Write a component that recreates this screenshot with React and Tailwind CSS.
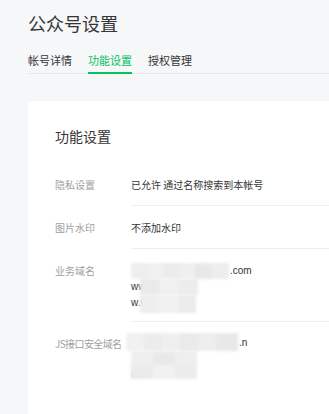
export default function App() {
  const font = { fontFamily: '"Noto Sans CJK SC", "Noto Sans", sans-serif' };
  const latin = { fontFamily: '"Liberation Sans", sans-serif' };

  const tabs = ['帐号详情', '功能设置', '授权管理'];

  return (
    <div
      className="w-[329px] h-[414px] overflow-hidden bg-[#f6f7f8] pl-[28px] text-[#353535]"
      style={font}
    >
      {/* Header */}
      <h1 className="pt-[9px] text-[18px] leading-[28px] font-normal">公众号设置</h1>

      {/* Tabs */}
      <div className="mt-[13px] flex gap-[16px] border-b border-[#e4e6e8]">
        {tabs.map((t, i) => (
          <div
            key={t}
            className={`-mb-px pb-[2px] text-[11px] leading-[20px] border-b-2 ${
              i === 1 ? 'border-[#07c160] text-[#07c160]' : 'border-transparent'
            }`}
          >
            {t}
          </div>
        ))}
      </div>

      {/* Card */}
      <div className="mt-[27px] h-[400px] rounded-tl-[3px] bg-white pl-[27px] pt-[25px] shadow-[0_0_2px_rgba(0,0,0,0.04)]">
        <h2 className="mb-[17px] text-[14px] leading-[20px] font-normal">功能设置</h2>

        <div className="text-[10px] leading-[16px]">
          <div className="flex">
            <div className="w-[76px] pt-[14px] text-[#a0a0a0]">隐私设置</div>
            <div className="flex-1 border-b border-[#eeeeee] pt-[14px] pb-[12px]">
              已允许 通过名称搜索到本帐号
            </div>
          </div>

          <div className="flex">
            <div className="w-[76px] pt-[14px] text-[#a0a0a0]">图片水印</div>
            <div className="flex-1 border-b border-[#eeeeee] pt-[14px] pb-[12px]">不添加水印</div>
          </div>

          <div className="flex">
            <div className="w-[76px] pt-[14px] text-[#a0a0a0]">业务域名</div>
            <div className="flex-1 border-b border-[#eeeeee] pt-[14px] pb-[10px]">
              <div className="relative" style={latin}>
                <div>
                  <span className="inline-block w-[99px]" />
                  .com
                </div>
                <div>ww</div>
                <div>w.w</div>
                {/* blurred patches */}
                <div className="absolute left-0 top-0 h-[16px] w-[98px] blur-[1.5px]">
                  <div className="flex h-full">
                    <div className="w-[16px] bg-[#eeeeee]" />
                    <div className="w-[16px] bg-[#f0f0f0]" />
                    <div className="w-[16px] bg-[#ebebeb]" />
                    <div className="w-[16px] bg-[#efefef]" />
                    <div className="w-[16px] bg-[#e8e8e8]" />
                    <div className="w-[18px] bg-[#ededed]" />
                  </div>
                </div>
                <div className="absolute left-[9px] top-[16px] h-[16px] w-[58px] blur-[1.5px]">
                  <div className="flex h-full">
                    <div className="w-[20px] bg-[#eaeaea]" />
                    <div className="w-[18px] bg-[#f0f0f0]" />
                    <div className="w-[20px] bg-[#ececec]" />
                  </div>
                </div>
                <div className="absolute left-[9px] top-[32px] h-[18px] w-[56px] blur-[1.5px]">
                  <div className="flex h-full">
                    <div className="w-[18px] bg-[#ededed]" />
                    <div className="w-[20px] bg-[#f1f1f1]" />
                    <div className="w-[18px] bg-[#ebebeb]" />
                  </div>
                </div>
              </div>
            </div>
          </div>

          <div className="flex">
            <div className="w-[76px] pt-[14px] text-[#a0a0a0] whitespace-nowrap tracking-[-0.6px]">
              JS接口安全域名
            </div>
            <div className="flex-1 pt-[13px]">
              <div className="relative" style={latin}>
                <div>
                  <span className="inline-block w-[108px]" />
                  .n
                </div>
                <div>&nbsp;</div>
                <div className="text-[#b0b0b0]">ne</div>
                <div className="absolute left-[-5px] top-[-2px] h-[18px] w-[112px] blur-[1.5px]">
                  <div className="flex h-full">
                    <div className="w-[18px] bg-[#f1f1f1]" />
                    <div className="w-[18px] bg-[#ececec]" />
                    <div className="w-[18px] bg-[#efefef]" />
                    <div className="w-[18px] bg-[#eaeaea]" />
                    <div className="w-[18px] bg-[#eeeeee]" />
                    <div className="w-[22px] bg-[#e8e8e8]" />
                  </div>
                </div>
                <div className="absolute left-0 top-[16px] h-[28px] w-[66px] blur-[1.5px]">
                  <div className="flex h-[14px]">
                    <div className="w-[22px] bg-[#efefef]" />
                    <div className="w-[22px] bg-[#e9e9e9]" />
                    <div className="w-[22px] bg-[#eeeeee]" />
                  </div>
                  <div className="flex h-[14px]">
                    <div className="w-[22px] bg-[#ebebeb]" />
                    <div className="w-[22px] bg-[#f1f1f1]" />
                    <div className="w-[22px] bg-[#ececec]" />
                  </div>
                </div>
              </div>
            </div>
          </div>
        </div>
      </div>
    </div>
  );
}
